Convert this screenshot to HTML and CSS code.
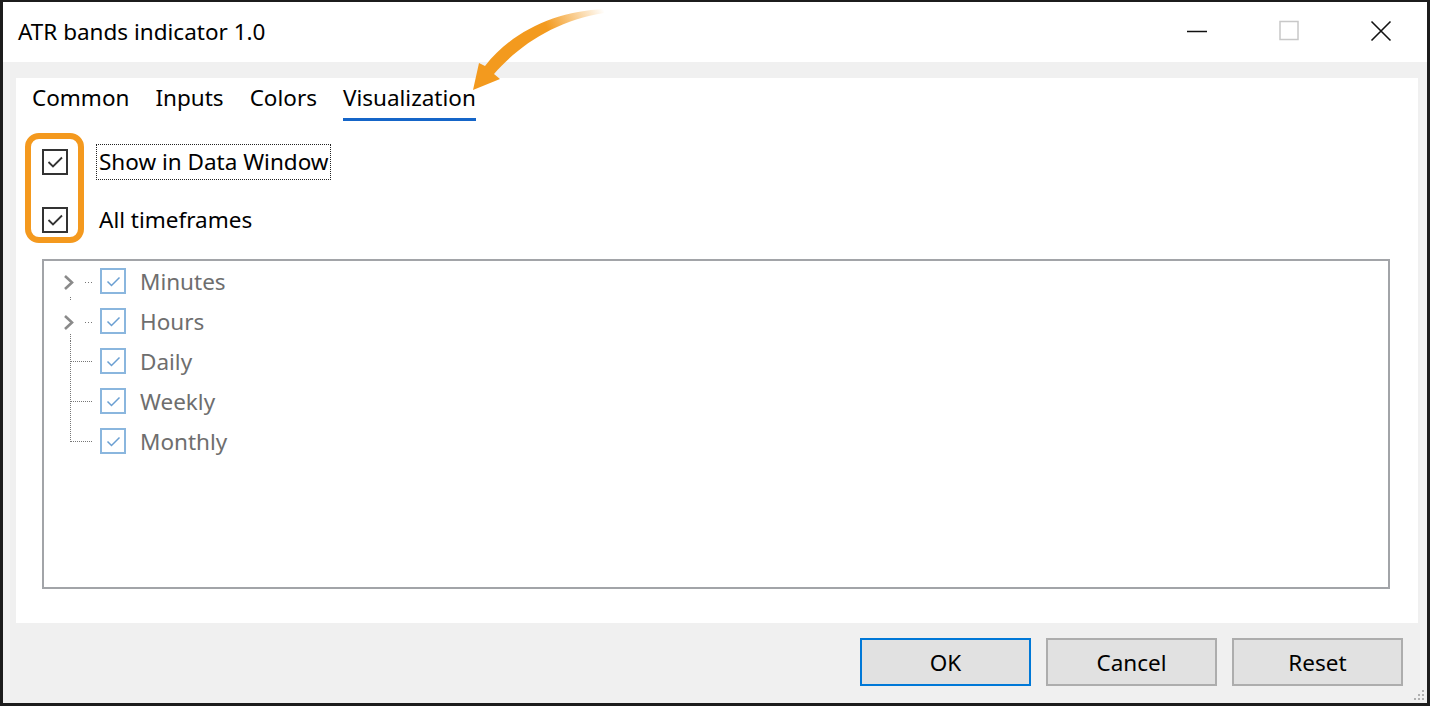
FILE: index.html
```html
<!DOCTYPE html>
<html>
<head>
    <title>ATR bands indicator 1.0</title>
    <link rel="stylesheet" href="styles.css">
</head>
<body>
    <div class="window">
        <div class="titlebar">
            <span class="title">ATR bands indicator 1.0</span>
            <div class="controls">
                <span class="ctl">
                    <svg width="22" height="22" viewBox="0 0 22 22"><line x1="1" y1="11.5" x2="21" y2="11.5" stroke="#111" stroke-width="1.5"/></svg>
                </span>
                <span class="ctl">
                    <svg width="22" height="22" viewBox="0 0 22 22"><rect x="2" y="1.5" width="18" height="18" fill="none" stroke="#c8c8c8" stroke-width="1.5"/></svg>
                </span>
                <span class="ctl">
                    <svg width="22" height="22" viewBox="0 0 22 22"><path d="M1.5 1.5 L20.5 20.5 M20.5 1.5 L1.5 20.5" stroke="#111" stroke-width="1.6"/></svg>
                </span>
            </div>
        </div>

        <div class="body">
            <div class="panel">
                <div class="tabs">
                    <span class="tab">Common</span>
                    <span class="tab">Inputs</span>
                    <span class="tab">Colors</span>
                    <span class="tab active">Visualization</span>
                </div>

                <div class="option first">
                    <span class="check">
                        <svg width="22" height="22" viewBox="0 0 22 22"><path d="M4.5 11 L9 15.5 L18 6.5" fill="none" stroke="#333" stroke-width="1.8"/></svg>
                    </span>
                    <span class="label focus">Show in Data Window</span>
                </div>
                <div class="option">
                    <span class="check">
                        <svg width="22" height="22" viewBox="0 0 22 22"><path d="M4.5 11 L9 15.5 L18 6.5" fill="none" stroke="#333" stroke-width="1.8"/></svg>
                    </span>
                    <span class="label">All timeframes</span>
                </div>

                <div class="tree">
                    <div class="node">
                        <svg class="lines" width="56" height="40" viewBox="0 0 56 40">
                            <polyline points="21,15 28,21.5 21,28" fill="none" stroke="#8a8a8a" stroke-width="2.6"/>
                            <line x1="41" y1="21.5" x2="49" y2="21.5" stroke="#777" stroke-dasharray="1 2"/>
                            <line x1="26.5" y1="36" x2="26.5" y2="41" stroke="#777" stroke-dasharray="1 1"/>
                        </svg>
                        <span class="tcheck"><svg width="21" height="21" viewBox="0 0 21 21"><path d="M4.5 10.5 L8.5 14.5 L16.5 6.5" fill="none" stroke="#6a9fd2" stroke-width="1.5"/></svg></span>
                        <span class="tlabel">Minutes</span>
                    </div>
                    <div class="node">
                        <svg class="lines" width="56" height="40" viewBox="0 0 56 40">
                            <polyline points="21,15 28,21.5 21,28" fill="none" stroke="#8a8a8a" stroke-width="2.6"/>
                            <line x1="41" y1="21.5" x2="49" y2="21.5" stroke="#777" stroke-dasharray="1 2"/>
                            <line x1="26.5" y1="33" x2="26.5" y2="40" stroke="#777" stroke-dasharray="1 1"/>
                        </svg>
                        <span class="tcheck"><svg width="21" height="21" viewBox="0 0 21 21"><path d="M4.5 10.5 L8.5 14.5 L16.5 6.5" fill="none" stroke="#6a9fd2" stroke-width="1.5"/></svg></span>
                        <span class="tlabel">Hours</span>
                    </div>
                    <div class="node">
                        <svg class="lines" width="56" height="40" viewBox="0 0 56 40">
                            <line x1="26.5" y1="0" x2="26.5" y2="40" stroke="#777" stroke-dasharray="1 1"/>
                            <line x1="27" y1="20.5" x2="49" y2="20.5" stroke="#777" stroke-dasharray="1 1"/>
                        </svg>
                        <span class="tcheck"><svg width="21" height="21" viewBox="0 0 21 21"><path d="M4.5 10.5 L8.5 14.5 L16.5 6.5" fill="none" stroke="#6a9fd2" stroke-width="1.5"/></svg></span>
                        <span class="tlabel">Daily</span>
                    </div>
                    <div class="node">
                        <svg class="lines" width="56" height="40" viewBox="0 0 56 40">
                            <line x1="26.5" y1="0" x2="26.5" y2="40" stroke="#777" stroke-dasharray="1 1"/>
                            <line x1="27" y1="20.5" x2="49" y2="20.5" stroke="#777" stroke-dasharray="1 1"/>
                        </svg>
                        <span class="tcheck"><svg width="21" height="21" viewBox="0 0 21 21"><path d="M4.5 10.5 L8.5 14.5 L16.5 6.5" fill="none" stroke="#6a9fd2" stroke-width="1.5"/></svg></span>
                        <span class="tlabel">Weekly</span>
                    </div>
                    <div class="node">
                        <svg class="lines" width="56" height="40" viewBox="0 0 56 40">
                            <line x1="26.5" y1="0" x2="26.5" y2="21" stroke="#777" stroke-dasharray="1 1"/>
                            <line x1="27" y1="20.5" x2="49" y2="20.5" stroke="#777" stroke-dasharray="1 1"/>
                        </svg>
                        <span class="tcheck"><svg width="21" height="21" viewBox="0 0 21 21"><path d="M4.5 10.5 L8.5 14.5 L16.5 6.5" fill="none" stroke="#6a9fd2" stroke-width="1.5"/></svg></span>
                        <span class="tlabel">Monthly</span>
                    </div>
                </div>
            </div>

            <div class="buttons">
                <button class="btn default">OK</button>
                <button class="btn">Cancel</button>
                <button class="btn">Reset</button>
            </div>

            <svg class="grip" width="12" height="12" viewBox="0 0 12 12">
                <rect x="9" y="1" width="2" height="2" fill="#b0b0b0"/>
                <rect x="5" y="5" width="2" height="2" fill="#b0b0b0"/>
                <rect x="9" y="5" width="2" height="2" fill="#b0b0b0"/>
                <rect x="1" y="9" width="2" height="2" fill="#b0b0b0"/>
                <rect x="5" y="9" width="2" height="2" fill="#b0b0b0"/>
                <rect x="9" y="9" width="2" height="2" fill="#b0b0b0"/>
            </svg>
        </div>

        <!-- annotations drawn over the dialog -->
        <div class="highlight"></div>
        <svg class="arrow" width="1430" height="120" viewBox="0 0 1430 120">
            <defs>
                <linearGradient id="fade" gradientUnits="userSpaceOnUse" x1="488" y1="70" x2="604" y2="10">
                    <stop offset="0" stop-color="#f39a1e"/>
                    <stop offset="0.55" stop-color="#f39a1e"/>
                    <stop offset="1" stop-color="#f39a1e" stop-opacity="0"/>
                </linearGradient>
            </defs>
            <path d="M604 9 C558 11 513 30 485 66 L479 63 L473 90 L500 79 L494 74 C520 44 558 20 604 13 Z" fill="url(#fade)"/>
        </svg>
    </div>
</body>
</html>
```

FILE: styles.css
```css
* {
    box-sizing: border-box;
}

body {
    margin: 0;
    font-family: "Noto Sans", "Open Sans", sans-serif;
    background-color: #1b1b1b;
}

.window {
    position: relative;
    width: 1430px;
    height: 706px;
    border: 3px solid #1c1c1c;
    border-top-width: 2px;
    background-color: #f0f0f0;
    display: flex;
    flex-direction: column;
}

.titlebar {
    height: 60px;
    background-color: #fff;
    display: flex;
    align-items: center;
    padding-left: 15px;
}

.title {
    font-size: 22.5px;
    color: #000;
    flex: 1;
    margin-top: -2px;
}

.controls {
    display: flex;
    align-items: center;
    margin-top: -2px;
}

.ctl {
    width: 92px;
    height: 40px;
    display: flex;
    align-items: center;
    justify-content: center;
}

.body {
    position: relative;
    flex: 1;
    padding: 16px 9px 0 13px;
    display: flex;
    flex-direction: column;
}

.panel {
    height: 545px;
    background-color: #fff;
    padding: 0 0 0 16px;
}

.tabs {
    display: flex;
    gap: 26px;
    height: 43px;
}

.tab {
    font-size: 22.5px;
    color: #000;
    line-height: 40px;
    border-bottom: 3px solid transparent;
}

.tab.active {
    border-bottom-color: #1565c8;
}

.option {
    display: flex;
    align-items: center;
    height: 36px;
    padding-left: 10px;
    margin-top: 22px;
}

.option.first {
    margin-top: 23px;
}

.check {
    width: 26px;
    height: 26px;
    border: 2px solid #333;
    display: flex;
    align-items: center;
    justify-content: center;
    margin-right: 28px;
}

.label {
    font-size: 22.5px;
    color: #000;
    padding: 0 2px;
    line-height: 34px;
    border: 1px solid transparent;
}

.label.focus {
    border: 1px dotted #222;
}

.tree {
    margin: 21px 0 0 10px;
    width: 1348px;
    height: 330px;
    border: 2px solid #a2a4a8;
}

.node {
    display: flex;
    align-items: center;
    height: 40px;
}

.lines {
    flex: none;
}

.tcheck {
    width: 26px;
    height: 26px;
    border: 2px solid #8ab6de;
    display: flex;
    align-items: center;
    justify-content: center;
    margin-right: 14px;
}

.tlabel {
    font-size: 22.5px;
    color: #6e6e6e;
}

.buttons {
    display: flex;
    justify-content: flex-end;
    gap: 15px;
    margin-top: 15px;
    padding-right: 15px;
}

.btn {
    width: 171px;
    height: 48px;
    background-color: #e1e1e1;
    border: 2px solid #adadad;
    font-family: "Noto Sans", "Open Sans", sans-serif;
    font-size: 22.5px;
    color: #000;
    padding: 0;
}

.btn.default {
    border-color: #0078d7;
}

.grip {
    position: absolute;
    right: 2px;
    bottom: 2px;
}

.highlight {
    position: absolute;
    left: 22px;
    top: 131px;
    width: 59px;
    height: 110px;
    border: 6px solid #f4991e;
    border-radius: 14px;
}

.arrow {
    position: absolute;
    left: -3px;
    top: -2px;
    pointer-events: none;
}
```
